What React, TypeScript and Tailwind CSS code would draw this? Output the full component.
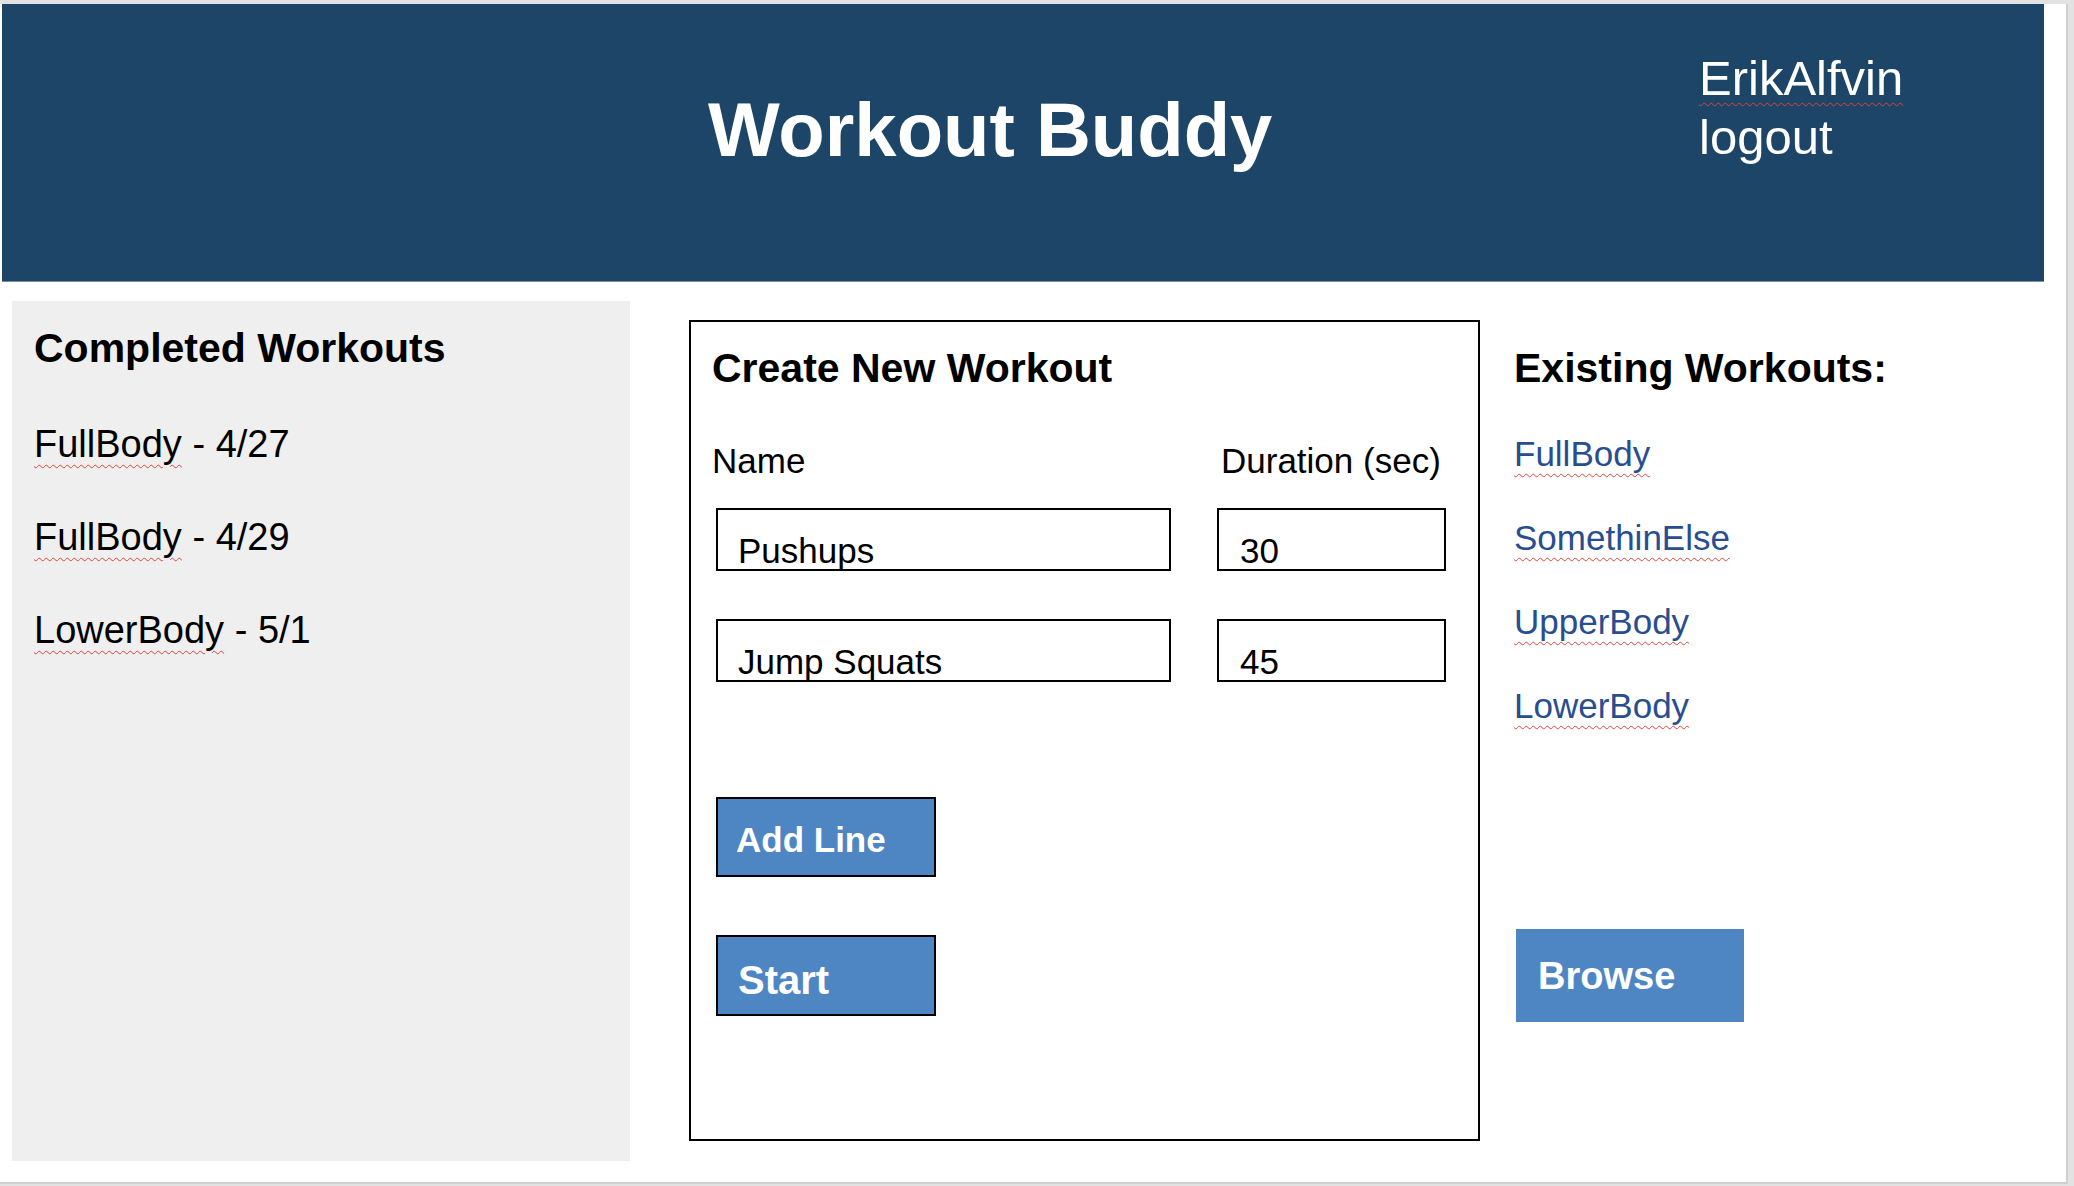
import React from 'react';

const squiggle = 'underline decoration-wavy decoration-[#e0433a] decoration-1 underline-offset-[7px]';

const completed = [
  { name: 'FullBody', date: '4/27' },
  { name: 'FullBody', date: '4/29' },
  { name: 'LowerBody', date: '5/1' },
];

const rows = [
  { name: 'Pushups', secs: '30' },
  { name: 'Jump Squats', secs: '45' },
];

const existing = ['FullBody', 'SomethinElse', 'UpperBody', 'LowerBody'];

export default function App() {
  return (
    <div className="w-[2074px] h-[1186px] bg-[#e2e2e2] overflow-hidden font-['Liberation_Sans',Arial,sans-serif] text-black">
      <div className="w-[2068px] h-[1180px] bg-white border-r-2 border-b-2 border-[#d0d0d0]">
        {/* header */}
        <div className="ml-[2px] mt-[4px] w-[2042px] h-[278px] bg-[#1c4567] border-b border-[#7790a7] flex items-start">
          <div className="w-[1697px] shrink-0 pl-[706px] pt-[88px]">
            <h1 className="text-[76px] font-bold leading-none text-white whitespace-nowrap">Workout Buddy</h1>
          </div>
          <div className="pt-[45px] text-[49px] leading-[59px] text-white">
            <div className={squiggle}>ErikAlfvin</div>
            <div>logout</div>
          </div>
        </div>

        <div className="flex items-start pt-[19px] pl-[12px]">
          {/* completed */}
          <div className="w-[618px] h-[860px] shrink-0 bg-[#efefef] pl-[22px] pt-[27px]">
            <h2 className="text-[41px] font-bold leading-none mb-[56px]">Completed Workouts</h2>
            <div className="flex flex-col gap-[55px] text-[38px] leading-none">
              {completed.map((c, i) => (
                <div key={i} className="whitespace-nowrap">
                  <span className={squiggle}>{c.name}</span> - {c.date}
                </div>
              ))}
            </div>
          </div>

          {/* create */}
          <div className="ml-[59px] mt-[19px] w-[791px] h-[821px] shrink-0 border-2 border-black pl-[21px] pt-[26px]">
            <h2 className="text-[41px] font-bold leading-none mb-[54px]">Create New Workout</h2>
            <div className="flex text-[35px] leading-none">
              <div className="w-[509px]">Name</div>
              <div>Duration (sec)</div>
            </div>
            <div className="mt-[30px] pl-[4px] flex flex-col gap-[48px]">
              {rows.map((r) => (
                <div key={r.name} className="flex gap-[46px] text-[35px] leading-none">
                  <div className="w-[455px] h-[63px] border-2 border-black pl-[20px] pt-[23px]">{r.name}</div>
                  <div className="w-[229px] h-[63px] border-2 border-black pl-[21px] pt-[23px]">{r.secs}</div>
                </div>
              ))}
            </div>
            <div className="mt-[115px] pl-[4px] flex flex-col gap-[58px] items-start">
              <button className="w-[220px] h-[80px] border-2 border-black bg-[#4d86c3] text-white font-bold text-[35px] leading-none text-left pl-[18px] pt-[4px]">
                Add Line
              </button>
              <button className="w-[220px] h-[81px] border-2 border-black bg-[#4d86c3] text-white font-bold text-[40px] leading-none text-left pl-[20px] pt-[9px]">
                Start
              </button>
            </div>
          </div>

          {/* existing */}
          <div className="ml-[34px] pt-[47px]">
            <h2 className="text-[41px] font-bold leading-none mb-[47px] whitespace-nowrap">Existing Workouts:</h2>
            <div className="flex flex-col gap-[49px] items-start text-[35px] leading-none text-[#284e8f]">
              {existing.map((w) => (
                <a key={w} className={squiggle}>{w}</a>
              ))}
            </div>
            <button className="mt-[206px] ml-[2px] w-[228px] h-[93px] bg-[#4e86c3] text-white font-bold text-[38px] leading-none text-left pl-[22px] pt-[0px]">
              Browse
            </button>
          </div>
        </div>
      </div>
    </div>
  );
}
